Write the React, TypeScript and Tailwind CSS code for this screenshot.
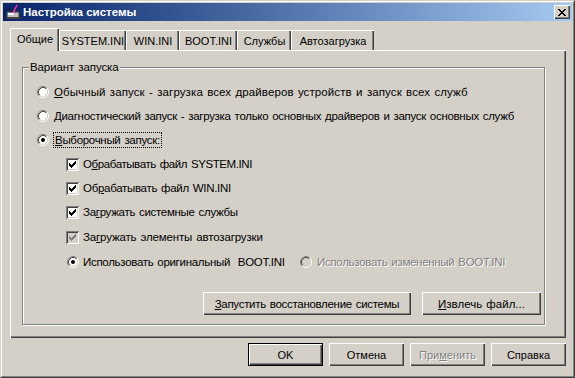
import React from "react";

const font =
  "font-['Liberation_Sans',Arial,sans-serif] text-[11.5px] leading-[14px] [word-spacing:1px] whitespace-nowrap";

const raised =
  "bg-[#d4d0c8] shadow-[inset_1px_1px_0_#fff,inset_-1px_-1px_0_#404040,inset_-2px_-2px_0_#808080]";

function CheckMark({ color }: { color: string }) {
  // classic 7x7 check glyph
  const px = [
    [6, 0],
    [5, 1], [6, 1],
    [0, 2], [4, 2], [5, 2], [6, 2],
    [0, 3], [1, 3], [3, 3], [4, 3], [5, 3],
    [0, 4], [1, 4], [2, 4], [3, 4], [4, 4],
    [1, 5], [2, 5], [3, 5],
    [2, 6],
  ];
  return (
    <svg width="7" height="7" viewBox="0 0 7 7" shapeRendering="crispEdges">
      {px.map(([x, y]) => (
        <rect key={`${x}-${y}`} x={x} y={y} width="1" height="1" fill={color} />
      ))}
    </svg>
  );
}

function Checkbox({ disabled }: { disabled?: boolean }) {
  return (
    <span
      className={`flex h-[13px] w-[13px] shrink-0 items-center justify-center shadow-[inset_1px_1px_0_#808080,inset_-1px_-1px_0_#fff,inset_2px_2px_0_#404040,inset_-2px_-2px_0_#d4d0c8] ${
        disabled ? "bg-[#d4d0c8]" : "bg-white"
      }`}
    >
      <CheckMark color={disabled ? "#808080" : "#000"} />
    </span>
  );
}

function Radio({ checked, disabled }: { checked?: boolean; disabled?: boolean }) {
  return (
    <svg width="12" height="12" viewBox="0 0 12 12" className="shrink-0">
      <circle cx="6" cy="6" r="4.5" fill={disabled ? "#d4d0c8" : "#fff"} />
      <path d="M2.11 9.89 A5.5 5.5 0 0 1 9.89 2.11" fill="none" stroke="#808080" />
      <path d="M9.89 2.11 A5.5 5.5 0 0 1 2.11 9.89" fill="none" stroke="#fff" />
      <path d="M2.82 9.18 A4.5 4.5 0 0 1 9.18 2.82" fill="none" stroke="#404040" />
      <path d="M9.18 2.82 A4.5 4.5 0 0 1 2.82 9.18" fill="none" stroke="#d4d0c8" />
      {checked && <circle cx="6" cy="6" r="2" fill="#000" />}
    </svg>
  );
}

function Btn({ children, w, def, disabled }: { children: React.ReactNode; w: string; def?: boolean; disabled?: boolean }) {
  return (
    <div
      className={`flex h-[23px] items-center justify-center ${w} ${
        def
          ? "border border-black bg-[#d4d0c8] shadow-[inset_1px_1px_0_#fff,inset_-1px_-1px_0_#404040,inset_-2px_-2px_0_#808080]"
          : raised
      } ${disabled ? "text-[#808080] [text-shadow:1px_1px_0_#fff]" : "text-black"}`}
    >
      {children}
    </div>
  );
}

const tabs = [
  { label: "SYSTEM.INI", w: "w-[67px]" },
  { label: "WIN.INI", w: "w-[53px]" },
  { label: "BOOT.INI", w: "w-[58px]" },
  { label: "Службы", w: "w-[54px]" },
  { label: "Автозагрузка", w: "w-[83px]" },
];

export default function App() {
  return (
    <div className={`h-[378px] w-[575px] border border-[#d4d0c8] border-b-[#404040] border-r-[#404040] bg-[#d4d0c8] ${font}`}>
      <div className="flex h-full w-full flex-col border border-white border-b-[#808080] border-r-[#808080] p-px">
        {/* title bar */}
        <div className="flex h-[18px] items-center bg-gradient-to-r from-[#0a246a] to-[#a6caf0] pl-[2px] pr-[2px]">
          <svg width="16" height="16" viewBox="0 0 16 16" className="shrink-0">
            <rect x="2" y="8" width="12" height="6" fill="#c0c0c0" stroke="#404040" />
            <rect x="3" y="9" width="6" height="2" fill="#fff" />
            <rect x="1" y="13" width="14" height="2" fill="#404040" />
            <path d="M8 9 L12 1" stroke="#ff2fa0" strokeWidth="1.5" />
            <path d="M4 4 L6 8" stroke="#202020" strokeWidth="1.5" />
          </svg>
          <span className="ml-[2px] font-bold text-white [word-spacing:0]">Настройка системы</span>
          <div className={`ml-auto flex h-[14px] w-[16px] items-center justify-center ${raised}`}>
            <svg width="8" height="7" viewBox="0 0 8 7" shapeRendering="crispEdges">
              <path d="M0 0h2v1h-2zM6 0h2v1h-2zM1 1h2v1h-2zM5 1h2v1h-2zM2 2h4v1h-4zM3 3h2v1h-2zM2 4h4v1h-4zM1 5h2v1h-2zM5 5h2v1h-2zM0 6h2v1h-2zM6 6h2v1h-2z" fill="#000" />
            </svg>
          </div>
        </div>

        <div className="ml-[7px] mr-[6px] mt-[7px] flex flex-col">
          {/* tabs */}
          <div className="flex h-[22px] items-end text-[11px]">
            <div className="relative z-10 -mb-px flex h-[23px] w-[49px] items-center justify-center rounded-tl-[2px] border-l border-t border-white bg-[#d4d0c8] pb-[2px] shadow-[inset_-1px_0_0_#404040,inset_-2px_0_0_#808080]">
              Общие
            </div>
            {tabs.map((t) => (
              <div
                key={t.label}
                className={`flex h-[20px] items-center justify-center rounded-tl-[2px] border-l border-t border-white bg-[#d4d0c8] ${t.w} shadow-[inset_-1px_0_0_#404040,inset_-2px_0_0_#808080]`}
              >
                {t.label}
              </div>
            ))}
          </div>

          {/* panel */}
          <div className="h-[288px] border-l border-t border-white tracking-[-0.3px] shadow-[inset_-1px_-1px_0_#404040,inset_-2px_-2px_0_#808080]">
            <div className="relative ml-[11px] mt-[16px] flex h-[258px] w-[523px] flex-col border border-[#808080] pt-[12px] shadow-[1px_1px_0_#fff,inset_1px_1px_0_#fff]">
              <span className="absolute -top-[8px] left-[6px] bg-[#d4d0c8] px-[1px] tracking-[-0.1px]">Вариант запуска</span>

              <div className="flex h-[24px] items-center pl-[14px]">
                <Radio />
                <span className="ml-[5px] tracking-[0.1px]">
                  <span className="underline">О</span>бычный запуск - загрузка всех драйверов устройств и запуск всех служб
                </span>
              </div>
              <div className="flex h-[24px] items-center pl-[14px]">
                <Radio />
                <span className="ml-[5px]">
                  <span className="underline">Д</span>иагностический запуск - загрузка только основных драйверов и запуск основных служб
                </span>
              </div>
              <div className="flex h-[24px] items-center pl-[14px]">
                <Radio checked />
                <span className="ml-[4px] border border-dotted border-black px-px">
                  <span className="underline">В</span>ыборочный запуск:
                </span>
              </div>

              <div className="flex h-[24px] items-center pl-[43px]">
                <Checkbox />
                <span className="ml-[4px] tracking-[-0.4px]">
                  О<span className="underline">б</span>рабатывать файл SYSTEM.INI
                </span>
              </div>
              <div className="flex h-[24px] items-center pl-[43px]">
                <Checkbox />
                <span className="ml-[4px]">
                  Об<span className="underline">р</span>абатывать файл WIN.INI
                </span>
              </div>
              <div className="flex h-[24px] items-center pl-[43px]">
                <Checkbox />
                <span className="ml-[4px]">
                  За<span className="underline">г</span>ружать системные службы
                </span>
              </div>
              <div className="flex h-[26px] items-center pl-[43px]">
                <Checkbox disabled />
                <span className="ml-[4px] tracking-[-0.15px]">
                  За<span className="underline">г</span>ружать элементы автозагрузки
                </span>
              </div>
              <div className="flex h-[24px] items-center pl-[44px]">
                <div className="flex w-[233px] items-center">
                  <Radio checked />
                  <span className="ml-[4px] whitespace-pre">Использовать оригинальный  BOOT.INI</span>
                </div>
                <Radio disabled />
                <span className="ml-[5px] text-[#808080] [text-shadow:1px_1px_0_#fff]">Использовать измененный BOOT.INI</span>
              </div>

              <div className="mt-[18px] flex gap-[11px] pl-[180px]">
                <Btn w="w-[208px]">
                  <span>
                    <span className="underline">З</span>апустить восстановление системы
                  </span>
                </Btn>
                <Btn w="w-[119px]">
                  <span className="tracking-[0px]">
                    <span className="underline">И</span>звлечь файл...
                  </span>
                </Btn>
              </div>
            </div>
          </div>

          {/* dialog buttons */}
          <div className="mt-[5px] flex justify-end gap-[6px] text-[11px]">
            <Btn w="w-[75px]" def>
              OK
            </Btn>
            <Btn w="w-[75px]">Отмена</Btn>
            <Btn w="w-[75px]" disabled>
              <span>
                При<span className="underline">м</span>енить
              </span>
            </Btn>
            <Btn w="w-[75px]">Справка</Btn>
          </div>
        </div>
      </div>
    </div>
  );
}
